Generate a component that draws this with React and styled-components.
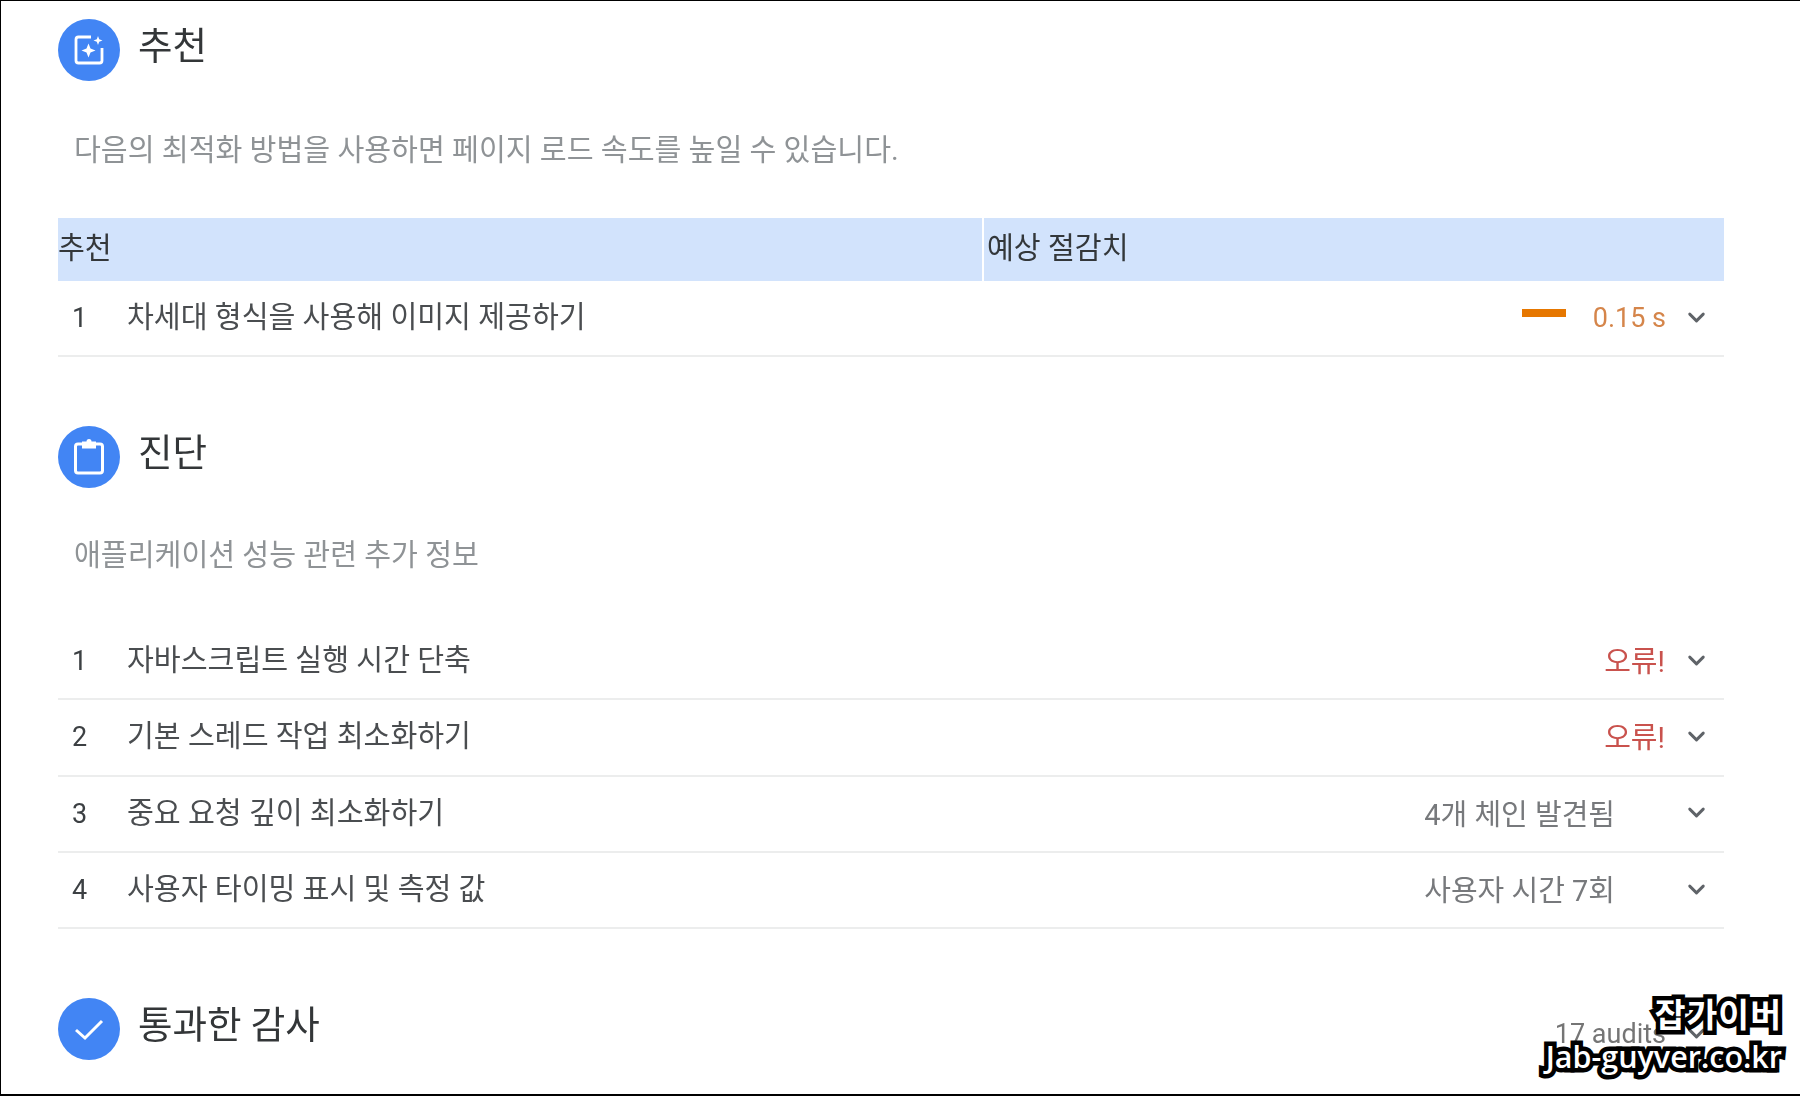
import React from "react";
import styled, { createGlobalStyle } from "styled-components";
import { ChevronDown } from "lucide-react";

const Global = createGlobalStyle`
  html, body { margin: 0; padding: 0; background: #fff; }
  body { font-family: Roboto, "Noto Sans CJK KR", sans-serif; }
`;

const Page = styled.div`
  position: relative;
  width: 1800px;
  height: 1096px;
  box-sizing: border-box;
  overflow: hidden;
  background: #fff;
  border-left: 1px solid #000;
  border-top: 1px solid #000;
  border-bottom: 2px solid #000;
  padding: 18px 76px 0 57px;
`;

const Content = styled.div`
  filter: blur(0.5px);
`;

const Section = styled.section`
  margin-top: ${(p) => p.$top || 0}px;
`;

const Header = styled.div`
  display: flex;
  align-items: flex-start;
  gap: 18px;
  height: 62px;
`;

const Circle = styled.div`
  width: 62px;
  height: 62px;
  flex: none;
  border-radius: 50%;
  background: #4285f4;
  display: flex;
  align-items: center;
  justify-content: center;
`;

const Title = styled.h2`
  flex: 1;
  margin: 4px 0 0;
  font-size: 37.5px;
  line-height: 46px;
  font-weight: 400;
  color: #333638;
`;

const Count = styled.div`
  display: flex;
  align-items: center;
  margin: 16px 14px 0 0;
  font-size: 27px;
  line-height: 40px;
  color: #757575;
`;

const Description = styled.p`
  margin: ${(p) => p.$top}px 0 0 16px;
  font-size: 29.2px;
  line-height: 40px;
  color: #8f9396;
  white-space: nowrap;
`;

const TableHead = styled.div`
  display: grid;
  grid-template-columns: 924px 1fr;
  column-gap: 2px;
  margin-top: 48px;
  height: 63px;
`;

const HeadCell = styled.div`
  background: #d2e3fc;
  display: flex;
  align-items: center;
  box-sizing: border-box;
  padding: 0 0 9px ${(p) => p.$pad || 0}px;
  font-size: 29.2px;
  color: #33373a;
`;

const List = styled.div`
  margin-top: ${(p) => p.$top || 0}px;
`;

const Row = styled.div`
  display: flex;
  align-items: center;
  box-sizing: border-box;
  height: ${(p) => p.$h || 76.33}px;
  border-bottom: 2px solid #eceded;
  padding: 0 14px;
`;

const Index = styled.span`
  width: 55px;
  flex: none;
  font-size: 27px;
  color: #3c4043;
`;

const Label = styled.span`
  flex: 1;
  font-size: 29.2px;
  color: #4a4d50;
  padding-bottom: 8px;
`;

const Bar = styled.span`
  width: 44px;
  height: 8px;
  background: #e67700;
  margin-right: 27px;
  margin-bottom: 10px;
`;

const Value = styled.span`
  font-size: ${(p) => p.$size || 29}px;
  color: ${(p) => p.$color};
  padding-bottom: ${(p) => p.$lift ?? 4}px;
`;

const Chevron = styled(ChevronDown)`
  width: 27px;
  height: 27px;
  margin-left: ${(p) => p.$gap}px;
  margin-bottom: 2px;
  color: #5f6368;
  stroke-width: 2.6;
`;

const Watermark = styled.div`
  position: absolute;
  right: 18px;
  bottom: 18px;
  display: flex;
  flex-direction: column;
  align-items: flex-end;
  font-family: "Noto Sans CJK KR", sans-serif;
  color: #fff;
  -webkit-text-stroke: 9px #000;
  paint-order: stroke fill;
  stroke-linejoin: round;
`;

const MarkTitle = styled.span`
  font-size: 33.5px;
  line-height: 46px;
  font-weight: 700;
  letter-spacing: 1px;
`;

const MarkUrl = styled.span`
  font-size: 30.5px;
  line-height: 40px;
  font-weight: 600;
  font-family: "Open Sans", "Noto Sans CJK KR", sans-serif;
`;

const Spark = () => (
  <svg width="34" height="34" viewBox="0 0 34 34" fill="none">
    <path d="M19 4H6.5A2.5 2.5 0 0 0 4 6.5v21A2.5 2.5 0 0 0 6.5 30h21a2.5 2.5 0 0 0 2.5-2.5V15" stroke="#fff" strokeWidth="2.8" />
    <path d="M16.5 10.5l2 5 5 2-5 2-2 5-2-5-5-2 5-2z" fill="#fff" />
    <path d="M26 3l1.2 3.3L30.5 7.5l-3.3 1.2L26 12l-1.2-3.3-3.3-1.2 3.3-1.2z" fill="#fff" />
  </svg>
);

const Clipboard = () => (
  <svg width="38" height="38" viewBox="0 0 38 38" fill="none">
    <rect x="5.5" y="6" width="27" height="29" rx="2.5" stroke="#fff" strokeWidth="3" />
    <path d="M12 3.5h4.5a2.5 2.5 0 0 1 5 0H26v7H12z" fill="#fff" />
  </svg>
);

const Check = () => (
  <svg width="32" height="32" viewBox="0 0 32 32" fill="none">
    <path d="M3 17l9 8L29 8" stroke="#fff" strokeWidth="3" />
  </svg>
);

const diag = [
  { t: "자바스크립트 실행 시간 단축", v: "오류!", c: "#c9524d", g: 18 },
  { t: "기본 스레드 작업 최소화하기", v: "오류!", c: "#c9524d", g: 18 },
  { t: "중요 요청 깊이 최소화하기", v: "4개 체인 발견됨", c: "#77797c", g: 68 },
  { t: "사용자 타이밍 표시 및 측정 값", v: "사용자 시간 7회", c: "#77797c", g: 68 },
];

export default function App() {
  return (
    <Page>
      <Global />
      <Content>
        <Section>
          <Header>
            <Circle><Spark /></Circle>
            <Title>추천</Title>
          </Header>
          <Description $top={49}>다음의 최적화 방법을 사용하면 페이지 로드 속도를 높일 수 있습니다.</Description>
          <TableHead>
            <HeadCell>추천</HeadCell>
            <HeadCell $pad={3}>예상 절감치</HeadCell>
          </TableHead>
          <Row $h={76}>
            <Index>1</Index>
            <Label>차세대 형식을 사용해 이미지 제공하기</Label>
            <Bar />
            <Value $size={27} $lift={0} $color="#d5854a">0.15 s</Value>
            <Chevron $gap={17} />
          </Row>
        </Section>
        <Section $top={69}>
          <Header>
            <Circle><Clipboard /></Circle>
            <Title>진단</Title>
          </Header>
          <Description $top={47}>애플리케이션 성능 관련 추가 정보</Description>
          <List $top={49}>
            {diag.map((d, i) => (
              <Row key={d.t}>
                <Index>{i + 1}</Index>
                <Label>{d.t}</Label>
                <Value $color={d.c}>{d.v}</Value>
                <Chevron $gap={d.g} />
              </Row>
            ))}
          </List>
        </Section>
        <Section $top={69}>
          <Header>
            <Circle><Check /></Circle>
            <Title>통과한 감사</Title>
            <Count>
              17 audits
              <Chevron $gap={17} />
            </Count>
          </Header>
        </Section>
      </Content>
      <Watermark>
        <MarkTitle>잡가이버</MarkTitle>
        <MarkUrl>Jab-guyver.co.kr</MarkUrl>
      </Watermark>
    </Page>
  );
}
